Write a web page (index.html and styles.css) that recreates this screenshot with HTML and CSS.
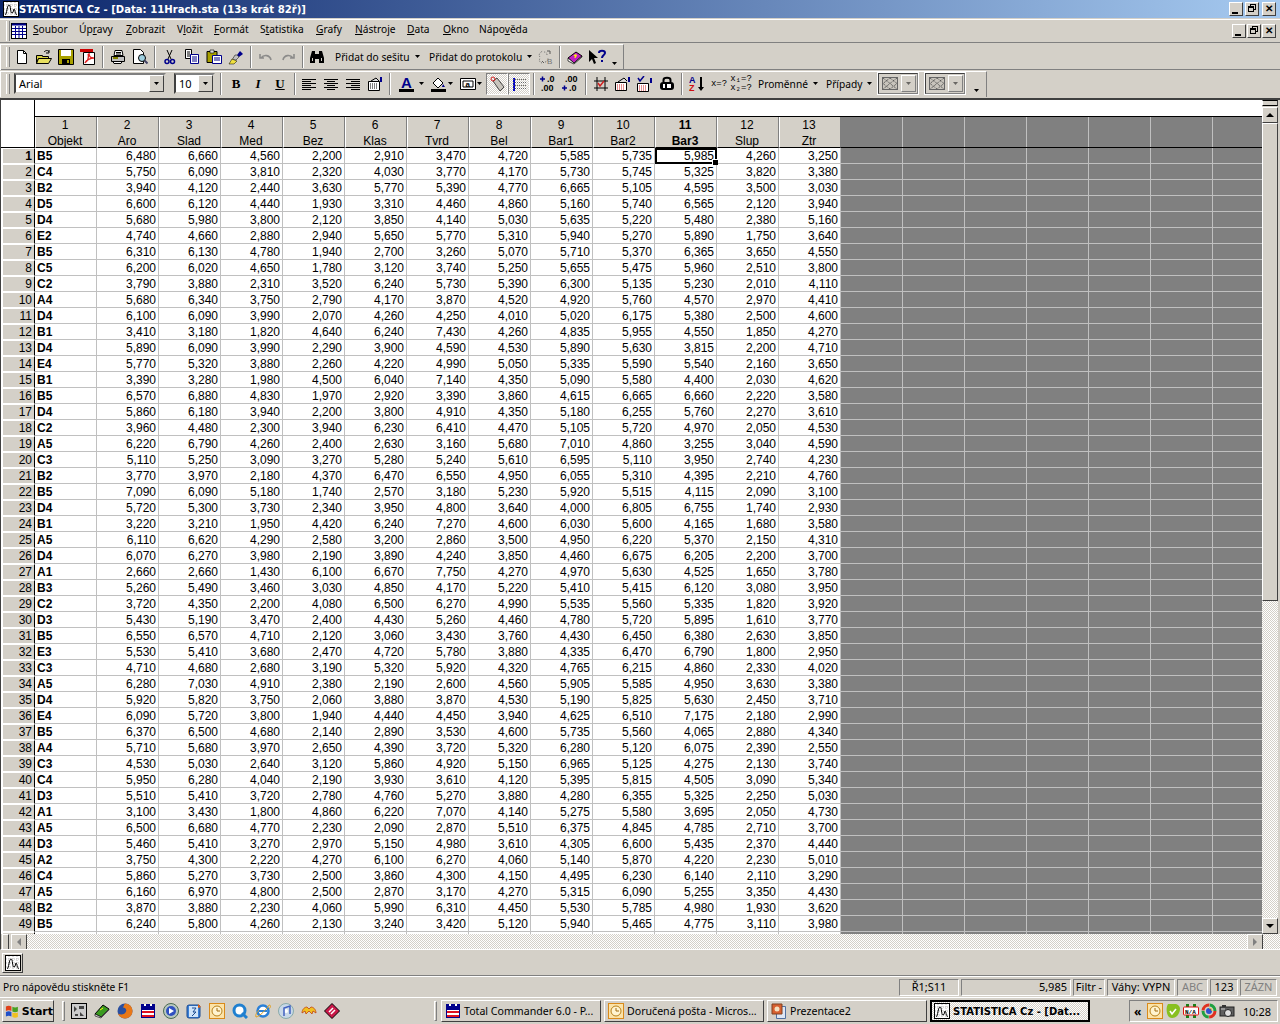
FILE: index.html
```html
<!DOCTYPE html>
<html lang="cs">
<head>
    <meta charset="UTF-8">
    <title>STATISTICA Cz - [Data: 11Hrach.sta (13s krát 82ř)]</title>
    <link rel="stylesheet" href="styles.css">
</head>
<body>
<svg class="defs" width="0" height="0">
    <defs>
        <symbol id="i-stat" viewBox="0 0 16 16"><rect x=".5" y=".5" width="15" height="15" fill="#fff" stroke="#000"/><path d="M4 1v14M8 1v14M12 1v14M1 4h14M1 8h14M1 12h14" stroke="#bbb" stroke-dasharray="1 1"/><path d="M2 14c2-1 2-10 4-10s1 8 3 8 1-4 2-4 1 5 3 6" fill="none" stroke="#000"/></symbol>
        <symbol id="i-floppy" viewBox="0 0 16 16"><path d="M1 1h14v14H1z" fill="#00008b"/><path d="M4 1h2v2H4zM10 1h2v2h-2z" fill="#fff"/><path d="M2 7h12v7H2z" fill="#fff"/><path d="M2 8h12v2H2zM2 12h12v2H2z" fill="#e01020"/></symbol>
        <symbol id="i-clock" viewBox="0 0 16 16"><rect x=".5" y=".5" width="15" height="15" fill="#fbe3a8" stroke="#d98a1a"/><circle cx="8" cy="8" r="5" fill="#fff4d0" stroke="#b8801a"/><path d="M8 5v3h3" fill="none" stroke="#a06a10"/></symbol>
        <symbol id="i-arrow" viewBox="0 0 5 3"><path d="M0 0h5L2.5 3z" fill="#000"/></symbol>
        <symbol id="i-hatch" viewBox="0 0 16 13" preserveAspectRatio="none"><rect x=".5" y=".5" width="15" height="12" fill="#c8c4bc" stroke="#666"/><path d="M1 1l14 11M15 1L1 12M8 1l7 5.500-7 5.500-7-5.500z" fill="none" stroke="#444" stroke-dasharray="1 1"/></symbol>
    </defs>
</svg>

<header class="titlebar">
    <svg class="ico16"><use href="#i-stat"/></svg>
    <span class="title-text">STATISTICA Cz - [Data: 11Hrach.sta (13s krát 82ř)]</span>
    <div class="win-btns">
        <button class="win-btn"><i class="g-min"></i></button>
        <button class="win-btn"><i class="g-max"></i></button>
        <button class="win-btn gap"><i class="g-close">✕</i></button>
    </div>
</header>

<nav class="menubar bar">
    <span class="grip"></span>
    <svg class="menu-ico" viewBox="0 0 16 16"><rect x=".5" y=".5" width="15" height="15" fill="#fff" stroke="#000"/><path d="M1 1.5h14" stroke="#00008b" stroke-width="2"/><path d="M1 5.5h14M1 8.5h14M1 11.5h14M4.5 3v12M8 3v12M11.5 3v12" stroke="#00008b"/></svg>
    <ul class="menu">
        <li><u>S</u>oubor</li>
        <li>Úp<u>r</u>avy</li>
        <li><u>Z</u>obrazit</li>
        <li>V<u>l</u>ožit</li>
        <li><u>F</u>ormát</li>
        <li>S<u>t</u>atistika</li>
        <li><u>G</u>rafy</li>
        <li><u>N</u>ástroje</li>
        <li><u>D</u>ata</li>
        <li><u>O</u>kno</li>
        <li>Nápo<u>v</u>ěda</li>
    </ul>
    <div class="win-btns mdi">
        <button class="win-btn"><i class="g-min"></i></button>
        <button class="win-btn"><i class="g-max"></i></button>
        <button class="win-btn"><i class="g-close">✕</i></button>
    </div>
</nav>

<div class="toolrow">
    <div class="toolbar tb1">
        <span class="grip"></span>
        <span class="tb"><svg viewBox="0 0 16 16"><path d="M3.5 1.5h6l3 3v10h-9z" fill="#fff" stroke="#000"/><path d="M9.5 1.5v3h3" fill="none" stroke="#000"/></svg></span>
        <span class="tb"><svg viewBox="0 0 16 16"><path d="M.5 6.5h6v1h6v2h-10l-2 5z" fill="#d8d040" stroke="#000"/><path d="M2.5 9.5h13l-3 5h-12z" fill="#e8e060" stroke="#000"/><path d="M8 3c2-2 4-2 5 0M13 1v3h-3" fill="none" stroke="#000"/></svg></span>
        <span class="tb"><svg viewBox="0 0 16 16"><path d="M.5.5h15v15H.5z" fill="#a8a000" stroke="#000"/><path d="M3 1h10v6H3z" fill="#fff"/><path d="M4 10h8v5H4z" fill="#000"/><path d="M9 11h2v3H9z" fill="#a8a000"/></svg></span>
        <span class="tb"><svg viewBox="0 0 16 16"><path d="M3.5 3.5h11v12h-11z" fill="#fff" stroke="#000"/><path d="M0 0h13v3H0z" fill="#c00"/><path d="M6 13c2-1 3-6 2-8M9 4c0 4 2 5 4 5M5 14c1-3 6-5 9-5" fill="none" stroke="#e02020" stroke-width="1.3"/></svg></span>
        <span class="sep"></span>
        <span class="tb"><svg viewBox="0 0 16 16"><path d="M5 1.5h7l1 5H4z" fill="#fff" stroke="#000"/><path d="M1.500 7.500h13v5h-13z" fill="#c0c0c0" stroke="#000"/><path d="M3 12.500h9l-1 2H4z" fill="#fff" stroke="#000"/><path d="M6 3.500h5M6 5h5" stroke="#000"/><path d="M3 9h5" stroke="#808000" stroke-width="2"/></svg></span>
        <span class="tb"><svg viewBox="0 0 16 16"><path d="M1.500 .5h7l3 3v11h-10z" fill="#fff" stroke="#000"/><circle cx="10" cy="9" r="3.500" fill="#9fd0e0" stroke="#000"/><path d="M12.500 11.500l3 3" stroke="#446" stroke-width="2"/></svg></span>
        <span class="sep"></span>
        <span class="tb"><svg viewBox="0 0 16 16"><path d="M5 1l4 9M10 1L6 10" stroke="#000" fill="none"/><circle cx="5" cy="12.500" r="2" fill="none" stroke="#00008b" stroke-width="1.500"/><circle cx="10.500" cy="12.500" r="2" fill="none" stroke="#00008b" stroke-width="1.500"/></svg></span>
        <span class="tb"><svg viewBox="0 0 16 16"><path d="M1.500 .5h6v9h-6z" fill="#fff" stroke="#000"/><path d="M3 3h3M3 5h3M3 7h3" stroke="#000"/><path d="M6.500 5.500h8v9h-8z" fill="#fff" stroke="#00008b"/><path d="M8 8h5M8 10h5M8 12h5" stroke="#00008b"/></svg></span>
        <span class="tb"><svg viewBox="0 0 16 16"><path d="M1 2.500h10v11H1z" fill="#a8a000" stroke="#000"/><path d="M4 1h4v3H4z" fill="#ddd" stroke="#000" stroke-width=".6"/><path d="M6.500 6.500h9v8h-9z" fill="#fff" stroke="#00008b"/><path d="M8 9h6M8 11h6" stroke="#00008b"/></svg></span>
        <span class="tb"><svg viewBox="0 0 16 16"><path d="M9 6l3-4 3 3-4 3z" fill="#00008b"/><path d="M9 6l2 2-3 3-4 0 3-5z" fill="#c0c0c0" stroke="#000" stroke-width=".5"/><path d="M1 15l3-5 5 2-3 3z" fill="#f0e040" stroke="#000" stroke-width=".5"/></svg></span>
        <span class="sep"></span>
        <span class="tb off"><svg viewBox="0 0 16 16"><path d="M2 5v4h4M3 9c3-4 9-3 10 2" fill="none" stroke="#808080" stroke-width="1.600"/></svg></span>
        <span class="tb off"><svg viewBox="0 0 16 16"><path d="M14 5v4h-4M13 9c-3-4-9-3-10 2" fill="none" stroke="#808080" stroke-width="1.600"/></svg></span>
        <span class="sep tight"></span>
        <span class="tb"><svg viewBox="0 0 16 16"><path d="M1 9l2-7h3v12H1zM15 9l-2-7h-3v12h5zM6 5h4v5H6z" fill="#000"/><path d="M3 9h1v3H3zM12 9h1v3h-1z" fill="#d4d0c8"/></svg></span>
        <span class="tb-text add1">Přidat do sešitu<svg class="drop"><use href="#i-arrow"/></svg></span>
        <span class="tb-text add2">Přidat do protokolu<svg class="drop"><use href="#i-arrow"/></svg></span>
        <span class="tb off"><svg viewBox="0 0 16 16"><path d="M3 8c-2-2 0-5 3-6M5 14c-3-1-3-3-2-5M8 13c2 0 3-2 3-4M10 6c0-2-1-3-3-3" fill="none" stroke="#666" stroke-dasharray="1 1"/><path d="M10 2h3v3M5 12l2 2" fill="none" stroke="#444"/><text x="10" y="15" class="svg-b">B</text></svg></span>
        <span class="sep"></span>
        <span class="tb"><svg viewBox="0 0 16 16"><path d="M1 9l8-6 6 4-8 7z" fill="#c020c0" stroke="#000"/><path d="M1 9v3l6 3 8-7V7l-8 7z" fill="#fff" stroke="#000" stroke-width=".7"/><path d="M7 7c1-2 3-1 2 0s-1 1-1 2" fill="none" stroke="#ff0" stroke-width="1.200"/></svg></span>
        <span class="tb wide"><svg viewBox="0 0 18 16"><path d="M1 1v12l3-3 2 5 2-1-2-5h4z" fill="#000"/><path d="M11 4c0-3 6-3 6 0 0 2-3 2-3 5M14 11v2" fill="none" stroke="#00008b" stroke-width="2"/></svg></span>
        <svg class="drop end"><use href="#i-arrow"/></svg>
    </div>
</div>

<div class="toolrow">
    <div class="toolbar tb2">
        <span class="grip"></span>
        <div class="combo font"><span class="combo-val">Arial</span><span class="combo-btn"><svg class="drop"><use href="#i-arrow"/></svg></span></div>
        <div class="combo size"><span class="combo-val">10</span><span class="combo-btn"><svg class="drop"><use href="#i-arrow"/></svg></span></div>
        <span class="sep"></span>
        <span class="tb fmt"><b>B</b></span>
        <span class="tb fmt"><b><em>I</em></b></span>
        <span class="tb fmt"><b><u>U</u></b></span>
        <span class="sep tight"></span>
        <span class="tb"><svg viewBox="0 0 16 16"><path d="M1 3.500h14M1 5.500h9M1 7.500h14M1 9.500h9M1 11.500h14M1 13.500h9" stroke="#000"/></svg></span>
        <span class="tb"><svg viewBox="0 0 16 16"><path d="M1 3.500h14M4 5.500h8M1 7.500h14M4 9.500h8M1 11.500h14M4 13.500h8" stroke="#000"/></svg></span>
        <span class="tb"><svg viewBox="0 0 16 16"><path d="M1 3.500h14M6 5.500h9M1 7.500h14M6 9.500h9M1 11.500h14M6 13.500h9" stroke="#000"/></svg></span>
        <span class="tb"><svg viewBox="0 0 16 16"><path d="M1.500 5.500h11v9h-11z" fill="#fff" stroke="#000"/><path d="M3 8h8M3 10h8M3 12h8" stroke="#000" stroke-dasharray="1 1"/><path d="M4 5l5-3 3 3" fill="#ddd" stroke="#000"/><path d="M13 1h2v5h-2z" fill="#00008b"/></svg></span>
        <span class="sep"></span>
        <span class="tb narrow colour"><span class="colour-a">A</span><i class="swatch"></i></span><svg class="drop split"><use href="#i-arrow"/></svg>
        <span class="tb narrow"><svg viewBox="0 0 16 16"><path d="M2 7l5-5 5 5-5 5z" fill="#fff" stroke="#000"/><path d="M12 8l2 3h-3z" fill="#00008b"/><path d="M0 13h15v3H0z" fill="#000"/></svg></span><svg class="drop split"><use href="#i-arrow"/></svg>
        <span class="tb narrow"><svg viewBox="0 0 16 16"><path d="M.5 2.500h15v11H.5z" fill="#fff" stroke="#000"/><path d="M3 5h10v6H3z" fill="#fff" stroke="#000"/><text x="5.500" y="10.500" class="svg-a">a</text></svg></span><svg class="drop split"><use href="#i-arrow"/></svg>
        <span class="tb on first"><svg viewBox="0 0 16 16"><path d="M4 5l4-3 7 9-4 4z" fill="#c8c4bc" stroke="#444"/><circle cx="4" cy="3" r="2" fill="none" stroke="#d02020"/></svg></span>
        <span class="tb on"><svg viewBox="0 0 16 16"><path d="M2 2h2v13H2z" fill="#0000c8"/><path d="M2 3.500h13M2 6.500h13M2 9.500h13M2 12.500h13" stroke="#666" stroke-dasharray="1 1"/></svg></span>
        <span class="sep"></span>
        <span class="tb dec"><svg viewBox="0 0 20 18"><path d="M1 4h5M3.500 1.500v5" stroke="#00008b" stroke-width="1.500"/><text x="8" y="7" class="svg-n">.0</text><text x="2" y="16" class="svg-n">.00</text></svg></span>
        <span class="tb dec"><svg viewBox="0 0 20 18"><text x="4" y="7" class="svg-n">.00</text><path d="M1 13h5M3.500 10.500v5" stroke="#00008b" stroke-width="1.500"/><text x="8" y="16" class="svg-n">.0</text></svg></span>
        <span class="sep"></span>
        <span class="tb"><svg viewBox="0 0 16 16"><path d="M1 5h14M1 12h14M4 1v14M12 1v14" stroke="#000"/><path d="M5 7l2 3 4-5" fill="none" stroke="#d02020" stroke-width="1.500"/></svg></span>
        <span class="tb"><svg viewBox="0 0 16 16"><path d="M.5 6.500h11v8H.5z" fill="#fff" stroke="#000"/><path d="M2 9h8M2 11h8M2 13h8" stroke="#d02020" stroke-dasharray="1 1"/><path d="M3 6l6-4 3 3" fill="#ddd" stroke="#000"/><path d="M13 1h2v5h-2z" fill="#00008b"/></svg></span>
        <span class="tb"><svg viewBox="0 0 16 16"><path d="M.5 7.500h11v8H.5z" fill="#fff" stroke="#000"/><path d="M2 10h8M2 12h8M2 14h8" stroke="#d02020" stroke-dasharray="1 1"/><path d="M1 2l2 3 4-5" fill="none" stroke="#00008b" stroke-width="1.500"/><path d="M13 2h2v5h-2z" fill="#00008b"/></svg></span>
        <span class="tb"><svg viewBox="0 0 16 16"><path d="M4.500 6V4c0-3 7-3 7 0v2" fill="none" stroke="#000" stroke-width="2"/><rect x="1" y="6" width="14" height="8" rx="3" fill="#000"/><path d="M4 8h2v4H4zM8 8h4v4H8z" fill="#fff"/></svg></span>
        <span class="sep"></span>
        <span class="tb"><svg viewBox="0 0 16 16"><text x="0" y="7" class="svg-az">A</text><text x="0" y="15" class="svg-az red">Z</text><path d="M12 1v11" stroke="#000" stroke-width="2"/><path d="M9 11h6l-3 4z" fill="#000"/></svg></span>
        <span class="tb-small">x=?</span>
        <span class="tb-small two">x₁=?<br>x₂=?</span>
        <span class="tb-text vars">Proměnné<svg class="drop"><use href="#i-arrow"/></svg></span>
        <span class="tb-text cases">Případy<svg class="drop"><use href="#i-arrow"/></svg></span>
        <div class="mini-combo"><svg class="hatch"><use href="#i-hatch"/></svg><span class="mini-btn"><svg class="drop off"><use href="#i-arrow"/></svg></span></div>
        <div class="mini-combo"><svg class="hatch"><use href="#i-hatch"/></svg><span class="mini-btn"><svg class="drop off"><use href="#i-arrow"/></svg></span></div>
        <svg class="drop end"><use href="#i-arrow"/></svg>
    </div>
</div>

<main class="sheet">
    <div class="sheet-top">
        <div class="grid-scroll">
            <table class="grid">
                <thead>
                    <tr class="note-row"><th class="corner" rowspan="2"></th><th colspan="13" class="note"></th></tr>
                    <tr class="head-row">
                        <th><div class="hd">1<br>Objekt</div></th><th><div class="hd">2<br>Aro</div></th><th><div class="hd">3<br>Slad</div></th><th><div class="hd">4<br>Med</div></th><th><div class="hd">5<br>Bez</div></th><th><div class="hd">6<br>Klas</div></th><th><div class="hd">7<br>Tvrd</div></th><th><div class="hd">8<br>Bel</div></th><th><div class="hd">9<br>Bar1</div></th><th><div class="hd">10<br>Bar2</div></th><th class="cur"><div class="hd">11<br>Bar3</div></th><th><div class="hd">12<br>Slup</div></th><th><div class="hd">13<br>Ztr</div></th>
                    </tr>
                </thead>
                <tbody>
                    <tr><th class="cur">1</th><td>B5</td><td>6,480</td><td>6,660</td><td>4,560</td><td>2,200</td><td>2,910</td><td>3,470</td><td>4,720</td><td>5,585</td><td>5,735</td><td class="active">5,985<i class="handle"></i></td><td>4,260</td><td>3,250</td></tr>
                    <tr><th>2</th><td>C4</td><td>5,750</td><td>6,090</td><td>3,810</td><td>2,320</td><td>4,030</td><td>3,770</td><td>4,170</td><td>5,730</td><td>5,745</td><td>5,325</td><td>3,820</td><td>3,380</td></tr>
                    <tr><th>3</th><td>B2</td><td>3,940</td><td>4,120</td><td>2,440</td><td>3,630</td><td>5,770</td><td>5,390</td><td>4,770</td><td>6,665</td><td>5,105</td><td>4,595</td><td>3,500</td><td>3,030</td></tr>
                    <tr><th>4</th><td>D5</td><td>6,600</td><td>6,120</td><td>4,440</td><td>1,930</td><td>3,310</td><td>4,460</td><td>4,860</td><td>5,160</td><td>5,740</td><td>6,565</td><td>2,120</td><td>3,940</td></tr>
                    <tr><th>5</th><td>D4</td><td>5,680</td><td>5,980</td><td>3,800</td><td>2,120</td><td>3,850</td><td>4,140</td><td>5,030</td><td>5,635</td><td>5,220</td><td>5,480</td><td>2,380</td><td>5,160</td></tr>
                    <tr><th>6</th><td>E2</td><td>4,740</td><td>4,660</td><td>2,880</td><td>2,940</td><td>5,650</td><td>5,770</td><td>5,310</td><td>5,940</td><td>5,270</td><td>5,890</td><td>1,750</td><td>3,640</td></tr>
                    <tr><th>7</th><td>B5</td><td>6,310</td><td>6,130</td><td>4,780</td><td>1,940</td><td>2,700</td><td>3,260</td><td>5,070</td><td>5,710</td><td>5,370</td><td>6,365</td><td>3,650</td><td>4,550</td></tr>
                    <tr><th>8</th><td>C5</td><td>6,200</td><td>6,020</td><td>4,650</td><td>1,780</td><td>3,120</td><td>3,740</td><td>5,250</td><td>5,655</td><td>5,475</td><td>5,960</td><td>2,510</td><td>3,800</td></tr>
                    <tr><th>9</th><td>C2</td><td>3,790</td><td>3,880</td><td>2,310</td><td>3,520</td><td>6,240</td><td>5,730</td><td>5,390</td><td>6,300</td><td>5,135</td><td>5,230</td><td>2,010</td><td>4,110</td></tr>
                    <tr><th>10</th><td>A4</td><td>5,680</td><td>6,340</td><td>3,750</td><td>2,790</td><td>4,170</td><td>3,870</td><td>4,520</td><td>4,920</td><td>5,760</td><td>4,570</td><td>2,970</td><td>4,410</td></tr>
                    <tr><th>11</th><td>D4</td><td>6,100</td><td>6,090</td><td>3,990</td><td>2,070</td><td>4,260</td><td>4,250</td><td>4,010</td><td>5,020</td><td>6,175</td><td>5,380</td><td>2,500</td><td>4,600</td></tr>
                    <tr><th>12</th><td>B1</td><td>3,410</td><td>3,180</td><td>1,820</td><td>4,640</td><td>6,240</td><td>7,430</td><td>4,260</td><td>4,835</td><td>5,955</td><td>4,550</td><td>1,850</td><td>4,270</td></tr>
                    <tr><th>13</th><td>D4</td><td>5,890</td><td>6,090</td><td>3,990</td><td>2,290</td><td>3,900</td><td>4,590</td><td>4,530</td><td>5,890</td><td>5,630</td><td>3,815</td><td>2,200</td><td>4,710</td></tr>
                    <tr><th>14</th><td>E4</td><td>5,770</td><td>5,320</td><td>3,880</td><td>2,260</td><td>4,220</td><td>4,990</td><td>5,050</td><td>5,335</td><td>5,590</td><td>5,540</td><td>2,160</td><td>3,650</td></tr>
                    <tr><th>15</th><td>B1</td><td>3,390</td><td>3,280</td><td>1,980</td><td>4,500</td><td>6,040</td><td>7,140</td><td>4,350</td><td>5,090</td><td>5,580</td><td>4,400</td><td>2,030</td><td>4,620</td></tr>
                    <tr><th>16</th><td>B5</td><td>6,570</td><td>6,880</td><td>4,830</td><td>1,970</td><td>2,920</td><td>3,390</td><td>3,860</td><td>4,615</td><td>6,665</td><td>6,660</td><td>2,220</td><td>3,580</td></tr>
                    <tr><th>17</th><td>D4</td><td>5,860</td><td>6,180</td><td>3,940</td><td>2,200</td><td>3,800</td><td>4,910</td><td>4,350</td><td>5,180</td><td>6,255</td><td>5,760</td><td>2,270</td><td>3,610</td></tr>
                    <tr><th>18</th><td>C2</td><td>3,960</td><td>4,480</td><td>2,300</td><td>3,940</td><td>6,230</td><td>6,410</td><td>4,470</td><td>5,105</td><td>5,720</td><td>4,970</td><td>2,050</td><td>4,530</td></tr>
                    <tr><th>19</th><td>A5</td><td>6,220</td><td>6,790</td><td>4,260</td><td>2,400</td><td>2,630</td><td>3,160</td><td>5,680</td><td>7,010</td><td>4,860</td><td>3,255</td><td>3,040</td><td>4,590</td></tr>
                    <tr><th>20</th><td>C3</td><td>5,110</td><td>5,250</td><td>3,090</td><td>3,270</td><td>5,280</td><td>5,240</td><td>5,610</td><td>6,595</td><td>5,110</td><td>3,950</td><td>2,740</td><td>4,230</td></tr>
                    <tr><th>21</th><td>B2</td><td>3,770</td><td>3,970</td><td>2,180</td><td>4,370</td><td>6,470</td><td>6,550</td><td>4,950</td><td>6,055</td><td>5,310</td><td>4,395</td><td>2,210</td><td>4,760</td></tr>
                    <tr><th>22</th><td>B5</td><td>7,090</td><td>6,090</td><td>5,180</td><td>1,740</td><td>2,570</td><td>3,180</td><td>5,230</td><td>5,920</td><td>5,515</td><td>4,115</td><td>2,090</td><td>3,100</td></tr>
                    <tr><th>23</th><td>D4</td><td>5,720</td><td>5,300</td><td>3,730</td><td>2,340</td><td>3,950</td><td>4,800</td><td>3,640</td><td>4,000</td><td>6,805</td><td>6,755</td><td>1,740</td><td>2,930</td></tr>
                    <tr><th>24</th><td>B1</td><td>3,220</td><td>3,210</td><td>1,950</td><td>4,420</td><td>6,240</td><td>7,270</td><td>4,600</td><td>6,030</td><td>5,600</td><td>4,165</td><td>1,680</td><td>3,580</td></tr>
                    <tr><th>25</th><td>A5</td><td>6,110</td><td>6,620</td><td>4,290</td><td>2,580</td><td>3,200</td><td>2,860</td><td>3,500</td><td>4,950</td><td>6,220</td><td>5,370</td><td>2,150</td><td>4,310</td></tr>
                    <tr><th>26</th><td>D4</td><td>6,070</td><td>6,270</td><td>3,980</td><td>2,190</td><td>3,890</td><td>4,240</td><td>3,850</td><td>4,460</td><td>6,675</td><td>6,205</td><td>2,200</td><td>3,700</td></tr>
                    <tr><th>27</th><td>A1</td><td>2,660</td><td>2,660</td><td>1,430</td><td>6,100</td><td>6,670</td><td>7,750</td><td>4,270</td><td>4,970</td><td>5,630</td><td>4,525</td><td>1,650</td><td>3,780</td></tr>
                    <tr><th>28</th><td>B3</td><td>5,260</td><td>5,490</td><td>3,460</td><td>3,030</td><td>4,850</td><td>4,170</td><td>5,220</td><td>5,410</td><td>5,415</td><td>6,120</td><td>3,080</td><td>3,950</td></tr>
                    <tr><th>29</th><td>C2</td><td>3,720</td><td>4,350</td><td>2,200</td><td>4,080</td><td>6,500</td><td>6,270</td><td>4,990</td><td>5,535</td><td>5,560</td><td>5,335</td><td>1,820</td><td>3,920</td></tr>
                    <tr><th>30</th><td>D3</td><td>5,430</td><td>5,190</td><td>3,470</td><td>2,400</td><td>4,430</td><td>5,260</td><td>4,460</td><td>4,780</td><td>5,720</td><td>5,895</td><td>1,610</td><td>3,770</td></tr>
                    <tr><th>31</th><td>B5</td><td>6,550</td><td>6,570</td><td>4,710</td><td>2,120</td><td>3,060</td><td>3,430</td><td>3,760</td><td>4,430</td><td>6,450</td><td>6,380</td><td>2,630</td><td>3,850</td></tr>
                    <tr><th>32</th><td>E3</td><td>5,530</td><td>5,410</td><td>3,680</td><td>2,470</td><td>4,720</td><td>5,780</td><td>3,880</td><td>4,335</td><td>6,470</td><td>6,790</td><td>1,800</td><td>2,950</td></tr>
                    <tr><th>33</th><td>C3</td><td>4,710</td><td>4,680</td><td>2,680</td><td>3,190</td><td>5,320</td><td>5,920</td><td>4,320</td><td>4,765</td><td>6,215</td><td>4,860</td><td>2,330</td><td>4,020</td></tr>
                    <tr><th>34</th><td>A5</td><td>6,280</td><td>7,030</td><td>4,910</td><td>2,380</td><td>2,190</td><td>2,600</td><td>4,560</td><td>5,905</td><td>5,585</td><td>4,950</td><td>3,630</td><td>3,380</td></tr>
                    <tr><th>35</th><td>D4</td><td>5,920</td><td>5,820</td><td>3,750</td><td>2,060</td><td>3,880</td><td>3,870</td><td>4,530</td><td>5,190</td><td>5,825</td><td>5,630</td><td>2,450</td><td>3,710</td></tr>
                    <tr><th>36</th><td>E4</td><td>6,090</td><td>5,720</td><td>3,800</td><td>1,940</td><td>4,440</td><td>4,450</td><td>3,940</td><td>4,625</td><td>6,510</td><td>7,175</td><td>2,180</td><td>2,990</td></tr>
                    <tr><th>37</th><td>B5</td><td>6,370</td><td>6,500</td><td>4,680</td><td>2,140</td><td>2,890</td><td>3,530</td><td>4,600</td><td>5,735</td><td>5,560</td><td>4,065</td><td>2,880</td><td>4,340</td></tr>
                    <tr><th>38</th><td>A4</td><td>5,710</td><td>5,680</td><td>3,970</td><td>2,650</td><td>4,390</td><td>3,720</td><td>5,320</td><td>6,280</td><td>5,120</td><td>6,075</td><td>2,390</td><td>2,550</td></tr>
                    <tr><th>39</th><td>C3</td><td>4,530</td><td>5,030</td><td>2,640</td><td>3,120</td><td>5,860</td><td>4,920</td><td>5,150</td><td>6,965</td><td>5,125</td><td>4,275</td><td>2,130</td><td>3,740</td></tr>
                    <tr><th>40</th><td>C4</td><td>5,950</td><td>6,280</td><td>4,040</td><td>2,190</td><td>3,930</td><td>3,610</td><td>4,120</td><td>5,395</td><td>5,815</td><td>4,505</td><td>3,090</td><td>5,340</td></tr>
                    <tr><th>41</th><td>D3</td><td>5,510</td><td>5,410</td><td>3,720</td><td>2,780</td><td>4,760</td><td>5,270</td><td>3,880</td><td>4,280</td><td>6,355</td><td>5,325</td><td>2,250</td><td>5,030</td></tr>
                    <tr><th>42</th><td>A1</td><td>3,100</td><td>3,430</td><td>1,800</td><td>4,860</td><td>6,220</td><td>7,070</td><td>4,140</td><td>5,275</td><td>5,580</td><td>3,695</td><td>2,050</td><td>4,730</td></tr>
                    <tr><th>43</th><td>A5</td><td>6,500</td><td>6,680</td><td>4,770</td><td>2,230</td><td>2,090</td><td>2,870</td><td>5,510</td><td>6,375</td><td>4,845</td><td>4,785</td><td>2,710</td><td>3,700</td></tr>
                    <tr><th>44</th><td>D3</td><td>5,460</td><td>5,410</td><td>3,270</td><td>2,970</td><td>5,150</td><td>4,980</td><td>3,610</td><td>4,305</td><td>6,600</td><td>5,435</td><td>2,370</td><td>4,440</td></tr>
                    <tr><th>45</th><td>A2</td><td>3,750</td><td>4,300</td><td>2,220</td><td>4,270</td><td>6,100</td><td>6,270</td><td>4,060</td><td>5,140</td><td>5,870</td><td>4,220</td><td>2,230</td><td>5,010</td></tr>
                    <tr><th>46</th><td>C4</td><td>5,860</td><td>5,270</td><td>3,730</td><td>2,500</td><td>3,860</td><td>4,300</td><td>4,150</td><td>4,495</td><td>6,230</td><td>6,140</td><td>2,110</td><td>3,290</td></tr>
                    <tr><th>47</th><td>A5</td><td>6,160</td><td>6,970</td><td>4,800</td><td>2,500</td><td>2,870</td><td>3,170</td><td>4,270</td><td>5,315</td><td>6,090</td><td>5,255</td><td>3,350</td><td>4,430</td></tr>
                    <tr><th>48</th><td>B2</td><td>3,870</td><td>3,880</td><td>2,230</td><td>4,060</td><td>5,990</td><td>6,310</td><td>4,450</td><td>5,530</td><td>5,785</td><td>4,980</td><td>1,930</td><td>3,620</td></tr>
                    <tr><th>49</th><td>B5</td><td>6,240</td><td>5,800</td><td>4,260</td><td>2,130</td><td>3,240</td><td>3,420</td><td>5,120</td><td>5,940</td><td>5,465</td><td>4,775</td><td>3,110</td><td>3,980</td></tr>
                    <tr><th></th><td></td><td></td><td></td><td></td><td></td><td></td><td></td><td></td><td></td><td></td><td></td><td></td><td></td></tr>
                </tbody>
            </table>
            <div class="grid-empty"><div class="empty-note"></div><div class="empty-head"></div><div class="empty-rows"></div></div>
        </div>
        <div class="vscroll">
            <span class="split-v"></span>
            <span class="sb-btn"><i class="tri-up"></i></span>
            <span class="sb-thumb"></span>
            <span class="sb-track"></span>
            <span class="sb-btn"><i class="tri-down"></i></span>
        </div>
    </div>
    <div class="hscroll">
        <span class="split-h"></span>
        <span class="sb-btn"><i class="tri-left"></i></span>
        <span class="sb-track"></span>
        <span class="sb-btn"><i class="tri-right"></i></span>
        <span class="sb-track corner-track"></span>
    </div>
</main>

<div class="docbar">
    <button class="doc-btn"><svg class="ico16"><use href="#i-stat"/></svg></button>
</div>

<footer class="statusbar">
    <span class="status-msg">Pro nápovědu stiskněte F1</span>
    <span class="pane p-cell">Ř1;S11</span>
    <span class="pane p-val">5,985</span>
    <span class="pane p-filt">Filtr -</span>
    <span class="pane p-wgt">Váhy: VYPN</span>
    <span class="pane p-abc dim">ABC</span>
    <span class="pane p-num">123</span>
    <span class="pane p-rec dim">ZÁZN</span>
</footer>

<div class="taskbar">
    <button class="start">
        <svg viewBox="0 0 16 16"><path d="M1 3c2-1 4-1 6 0v5c-2-1-4-1-6 0z" fill="#e0401a"/><path d="M8 3.500c2 1 4 1 6 0v5c-2 1-4 1-6 0z" fill="#48a020"/><path d="M1 9c2-1 4-1 6 0v5c-2-1-4-1-6 0z" fill="#2050c8"/><path d="M8 9.500c2 1 4 1 6 0v5c-2 1-4 1-6 0z" fill="#f0c020"/></svg>
        <b>Start</b>
    </button>
    <span class="task-grip"></span>
    <div class="quick">
        <svg viewBox="0 0 16 16"><rect x=".5" y=".5" width="15" height="15" fill="#ccc" stroke="#000"/><path d="M3 3l3 3-3 3zM8 3h5v3H8zM4 11h3v2H4zM9 9l4 4H9z" fill="#444"/></svg>
        <svg viewBox="0 0 16 16"><path d="M1 11L9 2l6 4-8 8z" fill="#3a9a20" stroke="#000"/><path d="M1 11v2l6 2 8-8V6l-8 8z" fill="#eee" stroke="#000" stroke-width=".6"/><path d="M6 7l3-2" stroke="#ff0"/></svg>
        <svg viewBox="0 0 16 16"><circle cx="8" cy="8" r="7.500" fill="#2a4fa0"/><path d="M8 .5c4 0 7.500 3 7.500 7.500S12 15.500 8 15.500c-3 0-6-2-7-5 3 2 7 1 8-2 1-2-1-4-3-4 1-2 1-3 2-4z" fill="#e87818"/></svg>
        <svg viewBox="0 0 16 16"><use href="#i-floppy"/></svg>
        <svg viewBox="0 0 16 16"><circle cx="8" cy="8" r="7.500" fill="#b8c8c0" stroke="#4a6a50"/><circle cx="8" cy="8" r="5" fill="#3050c0"/><path d="M6 5l5 3-5 3z" fill="#fff"/></svg>
        <svg viewBox="0 0 16 16"><rect x="1" y="2" width="13" height="13" rx="2" fill="#3a80d8" stroke="#1a4a90"/><rect x="3" y="3" width="9" height="11" fill="#cfe4fa"/><path d="M6 5h4l-3 4h3l-4 4" fill="none" stroke="#1a4a90"/><path d="M12 1l3 3-3 1z" fill="#e06010"/></svg>
        <svg viewBox="0 0 16 16"><use href="#i-clock"/></svg>
        <svg viewBox="0 0 16 16"><circle cx="7.500" cy="7.500" r="5.500" fill="#fff" stroke="#2080d0" stroke-width="3"/><path d="M10 10l5 5" stroke="#2080d0" stroke-width="3"/></svg>
        <svg viewBox="0 0 16 16"><circle cx="8" cy="8" r="5.500" fill="#fff" stroke="#2a80d8" stroke-width="2.500"/><path d="M4 8h8" stroke="#2a80d8" stroke-width="2"/><path d="M1 14C4 14 12 6 14 2c2 0 2 2 0 4M1 14c-1-2 1-5 3-7" fill="none" stroke="#e0a020"/></svg>
        <svg viewBox="0 0 16 16"><circle cx="8" cy="8" r="7.500" fill="#c8d8e8" stroke="#8aa"/><circle cx="8" cy="8" r="2" fill="#fff"/><path d="M6 13V5l6-2v8" fill="none" stroke="#4060c0" stroke-width="1.500"/></svg>
        <svg viewBox="0 0 16 16"><path d="M1 10c0-4 3-6 5-6l2 2 2-2c2 0 5 2 5 6l-3-2-1 3-3-3-3 3-1-3z" fill="#f0c020" stroke="#c04010" stroke-width=".8"/></svg>
        <svg viewBox="0 0 16 16"><path d="M8 .5L15.500 8 8 15.500.5 8z" fill="#c81848" stroke="#000"/><path d="M5 9l4-4M7 11l4-4" stroke="#fff" stroke-width="1.500"/></svg>
    </div>
    <span class="task-grip"></span>
    <div class="tasks">
        <button class="task"><svg class="ico16"><use href="#i-floppy"/></svg><span>Total Commander 6.0 - P...</span></button>
        <button class="task"><svg class="ico16"><use href="#i-clock"/></svg><span>Doručená pošta - Micros...</span></button>
        <button class="task"><svg class="ico16" viewBox="0 0 16 16"><path d="M5.500 3.500h9v12h-9z" fill="#dde6f5" stroke="#5070a0"/><path d="M1 1h10v10H1z" fill="#d86030" stroke="#804020"/><circle cx="6" cy="6" r="2.500" fill="#f4e0c0"/></svg><span>Prezentace2</span></button>
        <button class="task active"><svg class="ico16"><use href="#i-stat"/></svg><span>STATISTICA Cz - [Dat...</span></button>
    </div>
    <div class="tray">
        <span class="tray-more">«</span>
        <svg viewBox="0 0 16 16"><use href="#i-clock"/></svg>
        <svg viewBox="0 0 16 16"><path d="M3 1h8c4 1 5 5 3 9-2 5-7 6-10 4-3-3-3-10-1-13z" fill="#88c020"/><path d="M5 8l2 3 4-5" fill="none" stroke="#fff" stroke-width="1.600"/></svg>
        <svg viewBox="0 0 16 16"><path d="M3 1h3v3H3zM10 1h3v3h-3zM3 12h3v3H3zM10 12h3v3h-3z" fill="#188018"/><rect x=".5" y="4" width="15" height="8" rx="1" fill="#fff" stroke="#e01010"/><text x="2" y="10.500" class="svg-na">N/A</text></svg>
        <svg viewBox="0 0 16 16"><circle cx="8" cy="8" r="6" fill="none" stroke="#e03020" stroke-width="3" stroke-dasharray="9 10"/><circle cx="8" cy="8" r="6" fill="none" stroke="#20a040" stroke-width="3" stroke-dasharray="9 10" stroke-dashoffset="-9.500"/><circle cx="8" cy="8" r="3" fill="#3050d0"/><path d="M8 5a3 3 0 013 3" stroke="#f0c020" fill="none"/></svg>
        <svg viewBox="0 0 16 16"><rect x="1" y="4" width="14" height="9" fill="#606060" stroke="#222"/><rect x="3" y="2" width="4" height="2" fill="#333"/><circle cx="9" cy="10" r="3.500" fill="#e0e0e0" stroke="#222"/><path d="M2 6h4" stroke="#ccc"/></svg>
        <span class="clock">10:28</span>
    </div>
</div>
</body>
</html>
```

FILE: styles.css
```css
* {
    box-sizing: border-box;
}

html, body {
    margin: 0;
    height: 1024px;
    overflow: hidden;
}

body {
    width: 1280px;
    display: flex;
    flex-direction: column;
    background: #d4d0c8;
    font-family: "Noto Sans", "DejaVu Sans", sans-serif;
    font-size: 10.2px;
    color: #000;
}

.defs {
    position: absolute;
}

.ico16 {
    width: 16px;
    height: 16px;
    flex: none;
}

/* title bar */
.titlebar {
    height: 18px;
    padding-left: 3px;
    display: flex;
    align-items: center;
    background: linear-gradient(to right, #0a246a, #a6caf0);
    color: #fff;
    flex: none;
}

.title-text {
    font: bold 10.1px "DejaVu Sans", sans-serif;
    white-space: nowrap;
}

.win-btns {
    margin-left: auto;
    margin-right: 4px;
    display: flex;
}

.win-btn {
    width: 14px;
    height: 14px;
    margin-right: 2px;
    padding: 0;
    position: relative;
    background: #d4d0c8;
    border: 1px solid;
    border-color: #fff #404040 #404040 #fff;
    font-family: "Liberation Sans", sans-serif;
    color: #000;
}

.win-btn.gap {
    margin-left: 1px;
    margin-right: 0;
}

.g-min {
    position: absolute;
    left: 2px;
    bottom: 1px;
    width: 6px;
    height: 2px;
    background: #000;
}

.g-max {
    position: absolute;
    left: 2px;
    top: 3px;
    width: 6px;
    height: 6px;
    border: 1px solid #000;
    border-top-width: 2px;
    background: #d4d0c8;
    box-shadow: 2px -2px 0 -1px #d4d0c8, 2px -2px 0 0 #000;
}

.g-close {
    position: absolute;
    inset: 0;
    font-style: normal;
    font-size: 10px;
    font-weight: bold;
    line-height: 12px;
    text-align: center;
}

/* menu + toolbars */
.bar {
    height: 24px;
    margin-top: 1px;
    border-top: 1px solid #fff;
    border-bottom: 1px solid #808080;
    display: flex;
    align-items: center;
    flex: none;
}

.grip {
    width: 4px;
    height: 20px;
    margin: 0 1px 0 6px;
    flex: none;
    border-left: 1px solid #fff;
    border-right: 1px solid #808080;
    background: #d4d0c8;
}

.menu-ico {
    width: 16px;
    height: 16px;
    flex: none;
}

.menu {
    list-style: none;
    margin: 0 0 4px 6px;
    padding: 0;
    display: flex;
}

.menu li:nth-child(1) { width: 46px; }
.menu li:nth-child(2) { width: 47px; }
.menu li:nth-child(3) { width: 51px; }
.menu li:nth-child(4) { width: 37px; }
.menu li:nth-child(5) { width: 46px; }
.menu li:nth-child(6) { width: 56px; }
.menu li:nth-child(7) { width: 39px; }
.menu li:nth-child(8) { width: 52px; }
.menu li:nth-child(9) { width: 36px; }
.menu li:nth-child(10) { width: 36px; }

.mdi {
    margin-right: 3px;
}

.mdi .win-btn {
    margin-right: 1px;
}

.toolrow {
    height: 27px;
    padding-top: 1px;
    border-bottom: 1px solid #808080;
    flex: none;
}

.toolrow + .toolrow {
    border-bottom: 0;
    height: 28px;
}

.toolbar {
    height: 26px;
    padding-bottom: 2px;
    display: flex;
    align-items: center;
    border-top: 1px solid #fff;
    border-left: 1px solid #fff;
    border-right: 1px solid #808080;
}

.toolbar > .grip {
    margin-left: 5px;
}

.tb1 {
    width: 624px;
}

.tb2 {
    width: 987px;
}

.tb {
    width: 22px;
    height: 22px;
    display: flex;
    align-items: center;
    justify-content: center;
    flex: none;
}

.tb svg {
    width: 16px;
    height: 16px;
}

.tb.wide svg {
    width: 18px;
}

.tb.dec svg {
    width: 20px;
    height: 18px;
}

.tb.narrow {
    width: 17px;
    margin-left: 3px;
}

.tb.on {
    background-color: #ece9e4;
    background-image: conic-gradient(#fff 25%, #d4d0c8 0 50%, #fff 0 75%, #d4d0c8 0);
    background-size: 2px 2px;
    border: 1px solid;
    border-color: #808080 #fff #fff #808080;
}

.tb.on.first {
    margin-left: 1px;
}

.tb.off svg {
    opacity: .85;
}

.fmt {
    font: 13px "Liberation Serif", serif;
}

.fmt em {
    font-style: italic;
}

.tb.colour {
    width: 20px;
    margin-left: 4px;
    padding-right: 3px;
    flex-direction: column;
}

.colour-a {
    font: bold 15px/13px "Liberation Sans", sans-serif;
    color: #00008b;
}

.swatch {
    width: 15px;
    height: 3px;
    background: #000;
}

.sep {
    width: 2px;
    height: 22px;
    margin: 0 3px;
    flex: none;
    border-left: 1px solid #808080;
    border-right: 1px solid #fff;
}

.sep.tight {
    margin-right: 2px;
}

.drop {
    width: 5px;
    height: 3px;
    flex: none;
}

.drop.off {
    opacity: .5;
}

.drop.split {
    margin: 0 3px 0 1px;
}

.drop.end {
    align-self: flex-end;
    margin: 0 0 3px 4px;
}

.tb2 > .drop.end {
    margin-left: 2px;
}

.tb-text {
    display: flex;
    align-items: center;
    gap: 5px;
    white-space: nowrap;
    flex: none;
}

.add1 { margin-left: 7px; width: 94px; }
.add2 { width: 105px; }
.vars { margin-left: 6px; width: 68px; }
.cases { width: 52px; }

.tb-small {
    width: 22px;
    text-align: center;
    flex: none;
    font: 9px "Liberation Mono", monospace;
    white-space: nowrap;
}

.tb-small.two {
    line-height: 9px;
}

.svg-b {
    font: 8px "Liberation Sans", sans-serif;
    fill: #666;
}

.svg-a {
    font: bold 8px "Liberation Sans", sans-serif;
}

.svg-n {
    font: bold 9px "Liberation Sans", sans-serif;
}

.svg-az {
    font: bold 9px "Liberation Sans", sans-serif;
    fill: #00008b;
}

.svg-az.red {
    fill: #d01010;
}

.svg-na {
    font: bold 6px "Liberation Mono", monospace;
}

.combo {
    height: 21px;
    display: flex;
    background: #fff;
    border: 2px solid;
    border-color: #808080 #d4d0c8 #d4d0c8 #404040;
    font-size: 11px;
    flex: none;
}

.combo.font {
    width: 152px;
    margin-left: 3px;
}

.combo.size {
    width: 41px;
    margin: 0 2px 0 8px;
}

.combo-val {
    flex: 1;
    padding: 1px 0 0 3px;
}

.combo-btn {
    width: 15px;
    display: flex;
    align-items: center;
    justify-content: center;
    background: #d4d0c8;
    border: 1px solid;
    border-color: #fff #404040 #404040 #fff;
}

.mini-combo {
    width: 40px;
    height: 21px;
    margin-right: 7px;
    padding: 1px;
    display: flex;
    align-items: center;
    gap: 3px;
    outline: 1px solid #fff;
    border: 1px solid;
    border-color: #404040 #808080 #808080 #404040;
    flex: none;
}

.hatch {
    width: 16px;
    height: 13px;
    margin-left: 2px;
}

.mini-btn {
    width: 15px;
    height: 17px;
    display: flex;
    align-items: center;
    justify-content: center;
    border: 1px solid;
    border-color: #fff #808080 #808080 #fff;
}

/* data sheet */
.sheet {
    height: 852px;
    flex: none;
    display: flex;
    flex-direction: column;
    border-top: 2px solid #404040;
    border-left: 1px solid #404040;
    border-bottom: 1px solid #fff;
    overflow: hidden;
}

.sheet-top {
    height: 834px;
    display: flex;
    flex: none;
}

.grid-scroll {
    flex: 1;
    min-width: 0;
    display: flex;
    align-items: flex-start;
    overflow: hidden;
    background: #808080;
}

.grid {
    width: 840px;
    table-layout: fixed;
    border-collapse: separate;
    border-spacing: 0;
    background: #fff;
    font: 12px "Liberation Sans", sans-serif;
    flex: none;
}

.grid td {
    width: 62px;
    height: 16px;
    padding: 0 2px 0 0;
    border-right: 1px solid #c0c0c0;
    border-bottom: 1px solid #c0c0c0;
    text-align: right;
    line-height: 14px;
    white-space: nowrap;
    position: relative;
}

.grid td:nth-child(2) {
    padding: 0 0 0 2px;
    text-align: left;
    font-weight: bold;
}

.grid tbody th {
    width: 34px;
    height: 16px;
    padding: 0 2px 0 0;
    text-align: right;
    font-weight: normal;
    background: #d4d0c8;
    border: 1px solid;
    border-width: 1px 1px 1px 2px;
    border-color: #fff #000 #fff #fff;
    line-height: 13px;
}

.grid tbody th.cur {
    font-weight: bold;
}

.corner {
    width: 34px;
    background: #fff;
    border-right: 1px solid #000;
    border-bottom: 1px solid #000;
}

.note-row th.note {
    height: 17px;
    background: #fff;
    border-bottom: 1px solid #000;
}

.head-row th {
    height: 31px;
    padding: 0 2px 0 0;
    background: #d4d0c8;
    border-left: 1px solid #fff;
    border-right: 1px solid #808080;
    border-bottom: 1px solid #000;
    font-weight: normal;
    text-align: center;
}

.head-row th.cur {
    font-weight: bold;
}

.hd {
    height: 28px;
    margin-top: -2px;
    line-height: 16px;
}

.active {
    outline: 2px solid #000;
    outline-offset: -2px;
}

.handle {
    position: absolute;
    right: -2px;
    bottom: -2px;
    width: 5px;
    height: 5px;
    background: #000;
    border: 1px solid #fff;
    border-width: 1px 0 0 1px;
    box-sizing: content-box;
    z-index: 2;
}

.grid-empty {
    flex: 1;
    align-self: stretch;
    display: flex;
    flex-direction: column;
    background: #808080;
}

.empty-note {
    height: 17px;
    background: #fff;
    border-bottom: 1px solid #000;
    flex: none;
}

.empty-head {
    height: 31px;
    border-bottom: 1px solid #000;
    background: repeating-linear-gradient(to right, #808080 0 61px, #c0c0c0 61px 62px);
    flex: none;
}

.empty-rows {
    flex: 1;
    background:
        repeating-linear-gradient(to right, transparent 0 61px, #c0c0c0 61px 62px),
        repeating-linear-gradient(to bottom, transparent 0 15px, #c0c0c0 15px 16px);
}

/* scrollbars */
.hscroll {
    flex: 1;
    display: flex;
    align-items: stretch;
}

.vscroll {
    width: 16px;
    margin-right: 2px;
    flex: none;
    display: flex;
    flex-direction: column;
    background: #d4d0c8;
}

.split-h {
    width: 7px;
    margin: 0 2px 0 1px;
    background: #d4d0c8;
    border: 1px solid;
    border-color: #fff #404040 #404040 #fff;
    flex: none;
}

.split-v {
    height: 6px;
    border: 1px solid;
    border-color: #000 #404040 #000 #fff;
    background: #d4d0c8;
    flex: none;
}

.sb-btn {
    width: 16px;
    height: 16px;
    display: flex;
    align-items: center;
    justify-content: center;
    background: #d4d0c8;
    border: 1px solid;
    border-color: #fff #404040 #404040 #fff;
    flex: none;
}

.sb-track {
    flex: 1;
    background-color: #fff;
    background-image: conic-gradient(#d4d0c8 25%, #fff 0 50%, #d4d0c8 0 75%, #fff 0);
    background-size: 2px 2px;
}

.corner-track {
    flex: 0 0 17px;
}

.sb-thumb {
    height: 478px;
    background: #d4d0c8;
    border: 1px solid;
    border-color: #fff #404040 #404040 #fff;
    flex: none;
}

.vscroll .sb-btn:nth-child(2) {
    margin-top: 1px;
}

.tri-up, .tri-down, .tri-left, .tri-right {
    width: 0;
    height: 0;
    border: 4px solid transparent;
}

.tri-up { border-bottom-color: #000; border-top-width: 0; }
.tri-down { border-top-color: #000; border-bottom-width: 0; }
.tri-left { border-right-color: #808080; border-left-width: 0; }
.tri-right { border-left-color: #808080; border-right-width: 0; }

/* bottom */
.docbar {
    height: 26px;
    padding: 3px 0 0 2px;
    border-bottom: 1px solid #808080;
    flex: none;
}

.doc-btn {
    width: 21px;
    height: 20px;
    padding: 0;
    display: flex;
    align-items: center;
    justify-content: center;
    background: #d4d0c8;
    border: 1px solid;
    border-color: #fff #404040 #404040 #fff;
}

.statusbar {
    height: 21px;
    display: flex;
    align-items: center;
    border-top: 1px solid #fff;
    flex: none;
}

.status-msg {
    width: 899px;
    padding-left: 3px;
    flex: none;
}

.pane {
    height: 17px;
    margin-right: 2px;
    display: block;
    border: 1px solid;
    border-color: #808080 #fff #fff #808080;
    font-size: 11px;
    line-height: 14px;
    text-align: center;
    white-space: nowrap;
    flex: none;
}

.p-cell { width: 60px; }
.p-val { width: 110px; text-align: right; padding-right: 3px; }
.p-filt { width: 32px; }
.p-wgt { width: 68px; }
.p-abc { width: 31px; }
.p-num { width: 28px; }
.p-rec { width: 37px; margin-right: 0; }

.dim {
    color: #808080;
}

.taskbar {
    flex: 1;
    display: flex;
    align-items: center;
    border-top: 1px solid #fff;
}

.start {
    width: 52px;
    height: 22px;
    margin-left: 2px;
    padding: 0 0 0 2px;
    display: flex;
    align-items: center;
    gap: 2px;
    background: #d4d0c8;
    border: 1px solid;
    border-color: #fff #404040 #404040 #fff;
    font: 11px "DejaVu Sans", sans-serif;
}

.start svg {
    width: 16px;
    height: 16px;
}

.task-grip {
    width: 3px;
    height: 20px;
    margin: 0 3px 0 8px;
    border: 1px solid;
    border-color: #fff #808080 #808080 #fff;
    flex: none;
}

.quick {
    width: 377px;
    display: flex;
    gap: 7px;
    padding-left: 3px;
    flex: none;
}

.quick svg {
    width: 16px;
    height: 16px;
    flex: none;
}

.quick + .task-grip {
    margin: 0 4px 0 -11px;
}

.tasks {
    display: flex;
    gap: 3px;
    flex: none;
}

.task {
    width: 160px;
    height: 22px;
    padding: 0 0 0 3px;
    display: flex;
    align-items: center;
    gap: 3px;
    background: #d4d0c8;
    border: 1px solid;
    border-color: #fff #404040 #404040 #fff;
    font: 10.6px "Noto Sans", sans-serif;
    white-space: nowrap;
    flex: none;
}

.task.active {
    font: bold 10px "DejaVu Sans", sans-serif;
    background-color: #fff;
    background-image: conic-gradient(#d4d0c8 25%, #fff 0 50%, #d4d0c8 0 75%, #fff 0);
    background-size: 2px 2px;
    border-color: #404040 #fff #fff #404040;
}

.tray {
    width: 149px;
    height: 22px;
    margin-left: auto;
    margin-right: 2px;
    padding-left: 4px;
    display: flex;
    align-items: center;
    gap: 2px;
    border: 1px solid;
    border-color: #808080 #fff #fff #808080;
    font-size: 11px;
}

.tray svg {
    width: 16px;
    height: 16px;
    flex: none;
}

.tray-more {
    width: 11px;
    font-weight: bold;
    font-size: 12px;
}

.clock {
    margin-left: 6px;
}
```
